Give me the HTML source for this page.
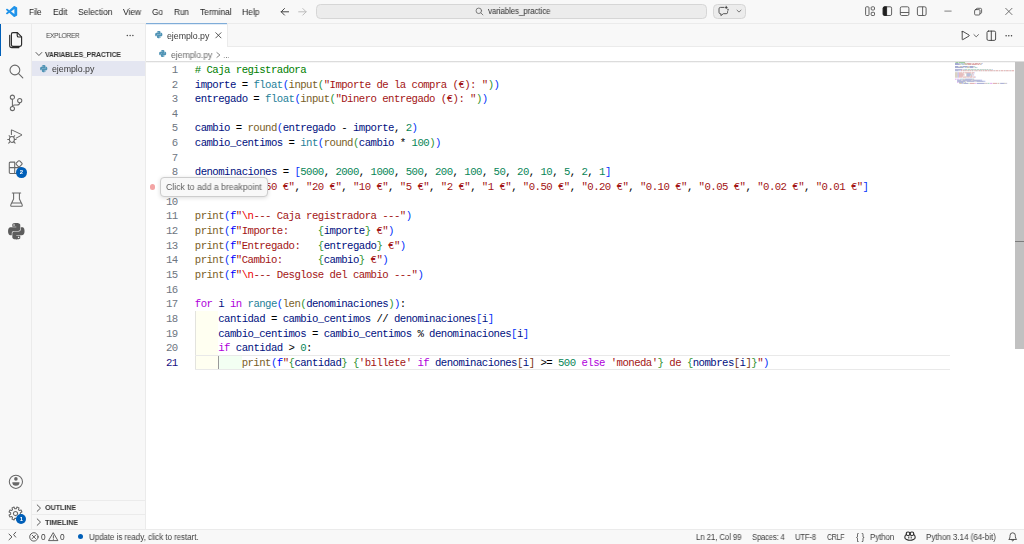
<!DOCTYPE html>
<html><head><meta charset="utf-8"><title>ejemplo.py - variables_practice</title>
<style>
html,body{margin:0;padding:0;}
body{width:1024px;height:544px;position:relative;overflow:hidden;background:#f8f8f8;font-family:"Liberation Sans",sans-serif;}
.a{position:absolute;}
.t{position:absolute;z-index:10;transform-origin:0 0;will-change:transform;white-space:pre;font-family:"Liberation Sans",sans-serif;}
.ln{position:absolute;left:146px;width:31.6px;text-align:right;font-family:"Liberation Mono",monospace;font-size:10.7px;letter-spacing:-0.557px;line-height:14.655px;height:14.655px;white-space:pre;}
.cl{position:absolute;left:194.8px;font-family:"Liberation Mono",monospace;font-size:10.7px;letter-spacing:-0.557px;line-height:14.655px;height:14.655px;white-space:pre;}
svg{position:absolute;overflow:visible;}
</style></head><body>
<!-- title bar -->
<div class="a" style="left:0;top:0;width:1024px;height:23px;background:#f8f8f8;border-bottom:1px solid #ebebeb;"></div>
<!-- search box -->
<div class="a" style="left:316.4px;top:3.8px;width:388.4px;height:13.6px;background:#ececec;border:0.8px solid #d6d6d6;border-radius:4.5px;"></div>
<!-- copilot button -->
<div class="a" style="left:713px;top:3.8px;width:31.2px;height:13.6px;background:#ececec;border:0.8px solid #d6d6d6;border-radius:4.5px;"></div>
<!-- activity bar -->
<div class="a" style="left:0;top:24px;width:31.2px;height:505px;background:#f8f8f8;border-right:1px solid #ebebeb;"></div>
<div class="a" style="left:0;top:24px;width:1.3px;height:31.5px;background:#005fb8;"></div>
<!-- sidebar -->
<div class="a" style="left:32.2px;top:24px;width:112.8px;height:505px;background:#f8f8f8;border-right:1px solid #ebebeb;"></div>
<div class="a" style="left:32.2px;top:61.4px;width:112.8px;height:14.7px;background:#e4e6f1;"></div>
<div class="a" style="left:32.2px;top:500px;width:112.8px;height:1px;background:#ebebeb;"></div>
<div class="a" style="left:32.2px;top:514.3px;width:112.8px;height:1px;background:#ebebeb;"></div>
<!-- tab bar -->
<div class="a" style="left:146px;top:24px;width:878px;height:22px;background:#f8f8f8;border-bottom:1px solid #ebebeb;"></div>
<div class="a" style="left:146px;top:23px;width:81px;height:24px;background:#ffffff;border-right:1px solid #ebebeb;"></div>
<div class="a" style="left:145.6px;top:23px;width:81.6px;height:1px;background:#7facd8;"></div><div class="a" style="left:145.6px;top:24px;width:81.6px;height:1px;background:#e3edf7;"></div>
<!-- editor -->
<div class="a" style="left:146px;top:47px;width:878px;height:482px;background:#ffffff;"></div>
<div class="a" style="left:146px;top:60.6px;width:878px;height:1px;background:#dcdcdc;"></div>
<div class="a" style="left:146px;top:61.6px;width:878px;height:1.5px;background:linear-gradient(#ececec,#ffffff);"></div>
<!-- indent rainbow -->
<div class="a" style="left:195px;top:311.2px;width:23.4px;height:58.4px;background:#fffff1;"></div>
<div class="a" style="left:218.4px;top:355.1px;width:23.2px;height:14.5px;background:#f3fff3;"></div>
<div class="a" style="left:194.5px;top:311.2px;width:0.8px;height:58.4px;background:#e3e3de;"></div>
<div class="a" style="left:217.8px;top:355.1px;width:0.9px;height:14.5px;background:#999999;"></div>
<!-- current line -->
<div class="a" style="left:195px;top:354.7px;width:755px;height:0.9px;background:#e9e9e9;"></div>
<div class="a" style="left:195px;top:369.1px;width:755px;height:0.9px;background:#e9e9e9;"></div>
<!-- scrollbar -->
<div class="a" style="left:1014.9px;top:61.5px;width:9.1px;height:287.2px;background:#c1c1c1;"></div>
<div class="a" style="left:1014.9px;top:240.6px;width:9.1px;height:1.6px;background:#7d7d7d;"></div>
<!-- tooltip -->
<div class="a" style="left:160.3px;top:176.9px;width:105.4px;height:18px;background:#f8f8f8;border:0.8px solid #cdcdcd;border-radius:4px;box-shadow:0 1px 4px rgba(0,0,0,0.14);z-index:20;"></div>
<div class="a" style="left:149.8px;top:184px;width:5.6px;height:5.6px;border-radius:50%;background:#f3a4a4;"></div>
<!-- status bar -->
<div class="a" style="left:0;top:529.3px;width:1024px;height:14.7px;background:#f8f8f8;border-top:1px solid #ebebeb;z-index:5;"></div>

<!--CODE-->
<svg style='left:0;top:0;z-index:3' width='1024' height='100' viewBox='0 0 1024 100' opacity='0.42' shape-rendering='auto'><rect x='955.00' y='62.00' width='0.53' height='0.84' fill='#008000'/><rect x='956.06' y='62.00' width='2.13' height='0.84' fill='#008000'/><rect x='958.72' y='62.00' width='6.38' height='0.84' fill='#008000'/><rect x='955.00' y='63.05' width='3.72' height='0.84' fill='#001080'/><rect x='959.26' y='63.05' width='0.53' height='0.84' fill='#000000'/><rect x='960.32' y='63.05' width='2.66' height='0.84' fill='#267f99'/><rect x='962.98' y='63.05' width='0.53' height='0.84' fill='#0431fa'/><rect x='963.51' y='63.05' width='2.66' height='0.84' fill='#795e26'/><rect x='966.17' y='63.05' width='0.53' height='0.84' fill='#319331'/><rect x='966.70' y='63.05' width='4.26' height='0.84' fill='#a31515'/><rect x='971.49' y='63.05' width='1.06' height='0.84' fill='#a31515'/><rect x='973.09' y='63.05' width='1.06' height='0.84' fill='#a31515'/><rect x='974.68' y='63.05' width='3.19' height='0.84' fill='#a31515'/><rect x='978.41' y='63.05' width='2.13' height='0.84' fill='#a31515'/><rect x='981.07' y='63.05' width='0.53' height='0.84' fill='#a31515'/><rect x='981.60' y='63.05' width='0.53' height='0.84' fill='#319331'/><rect x='982.13' y='63.05' width='0.53' height='0.84' fill='#0431fa'/><rect x='955.00' y='64.09' width='4.79' height='0.84' fill='#001080'/><rect x='960.32' y='64.09' width='0.53' height='0.84' fill='#000000'/><rect x='961.38' y='64.09' width='2.66' height='0.84' fill='#267f99'/><rect x='964.04' y='64.09' width='0.53' height='0.84' fill='#0431fa'/><rect x='964.58' y='64.09' width='2.66' height='0.84' fill='#795e26'/><rect x='967.24' y='64.09' width='0.53' height='0.84' fill='#319331'/><rect x='967.77' y='64.09' width='3.72' height='0.84' fill='#a31515'/><rect x='972.02' y='64.09' width='4.79' height='0.84' fill='#a31515'/><rect x='977.34' y='64.09' width='2.13' height='0.84' fill='#a31515'/><rect x='980.00' y='64.09' width='0.53' height='0.84' fill='#a31515'/><rect x='980.54' y='64.09' width='0.53' height='0.84' fill='#319331'/><rect x='981.07' y='64.09' width='0.53' height='0.84' fill='#0431fa'/><rect x='955.00' y='66.18' width='3.19' height='0.84' fill='#001080'/><rect x='958.72' y='66.18' width='0.53' height='0.84' fill='#000000'/><rect x='959.79' y='66.18' width='2.66' height='0.84' fill='#795e26'/><rect x='962.45' y='66.18' width='0.53' height='0.84' fill='#0431fa'/><rect x='962.98' y='66.18' width='4.79' height='0.84' fill='#001080'/><rect x='968.30' y='66.18' width='0.53' height='0.84' fill='#000000'/><rect x='969.36' y='66.18' width='3.72' height='0.84' fill='#001080'/><rect x='973.09' y='66.18' width='0.53' height='0.84' fill='#000000'/><rect x='974.15' y='66.18' width='0.53' height='0.84' fill='#098658'/><rect x='974.68' y='66.18' width='0.53' height='0.84' fill='#0431fa'/><rect x='955.00' y='67.22' width='7.98' height='0.84' fill='#001080'/><rect x='963.51' y='67.22' width='0.53' height='0.84' fill='#000000'/><rect x='964.58' y='67.22' width='1.60' height='0.84' fill='#267f99'/><rect x='966.17' y='67.22' width='0.53' height='0.84' fill='#0431fa'/><rect x='966.70' y='67.22' width='2.66' height='0.84' fill='#795e26'/><rect x='969.36' y='67.22' width='0.53' height='0.84' fill='#319331'/><rect x='969.90' y='67.22' width='3.19' height='0.84' fill='#001080'/><rect x='973.62' y='67.22' width='0.53' height='0.84' fill='#000000'/><rect x='974.68' y='67.22' width='1.60' height='0.84' fill='#098658'/><rect x='976.28' y='67.22' width='0.53' height='0.84' fill='#319331'/><rect x='976.81' y='67.22' width='0.53' height='0.84' fill='#0431fa'/><rect x='955.00' y='69.31' width='7.45' height='0.84' fill='#001080'/><rect x='962.98' y='69.31' width='0.53' height='0.84' fill='#000000'/><rect x='964.04' y='69.31' width='0.53' height='0.84' fill='#0431fa'/><rect x='964.58' y='69.31' width='2.13' height='0.84' fill='#098658'/><rect x='966.70' y='69.31' width='0.53' height='0.84' fill='#000000'/><rect x='967.77' y='69.31' width='2.13' height='0.84' fill='#098658'/><rect x='969.90' y='69.31' width='0.53' height='0.84' fill='#000000'/><rect x='970.96' y='69.31' width='2.13' height='0.84' fill='#098658'/><rect x='973.09' y='69.31' width='0.53' height='0.84' fill='#000000'/><rect x='974.15' y='69.31' width='1.60' height='0.84' fill='#098658'/><rect x='975.75' y='69.31' width='0.53' height='0.84' fill='#000000'/><rect x='976.81' y='69.31' width='1.60' height='0.84' fill='#098658'/><rect x='978.41' y='69.31' width='0.53' height='0.84' fill='#000000'/><rect x='979.47' y='69.31' width='1.60' height='0.84' fill='#098658'/><rect x='981.07' y='69.31' width='0.53' height='0.84' fill='#000000'/><rect x='982.13' y='69.31' width='1.06' height='0.84' fill='#098658'/><rect x='983.20' y='69.31' width='0.53' height='0.84' fill='#000000'/><rect x='984.26' y='69.31' width='1.06' height='0.84' fill='#098658'/><rect x='985.32' y='69.31' width='0.53' height='0.84' fill='#000000'/><rect x='986.39' y='69.31' width='1.06' height='0.84' fill='#098658'/><rect x='987.45' y='69.31' width='0.53' height='0.84' fill='#000000'/><rect x='988.52' y='69.31' width='0.53' height='0.84' fill='#098658'/><rect x='989.05' y='69.31' width='0.53' height='0.84' fill='#000000'/><rect x='990.11' y='69.31' width='0.53' height='0.84' fill='#098658'/><rect x='990.64' y='69.31' width='0.53' height='0.84' fill='#000000'/><rect x='991.71' y='69.31' width='0.53' height='0.84' fill='#098658'/><rect x='992.24' y='69.31' width='0.53' height='0.84' fill='#0431fa'/><rect x='955.00' y='70.36' width='3.72' height='0.84' fill='#001080'/><rect x='959.26' y='70.36' width='0.53' height='0.84' fill='#000000'/><rect x='960.32' y='70.36' width='0.53' height='0.84' fill='#0431fa'/><rect x='960.85' y='70.36' width='1.60' height='0.84' fill='#a31515'/><rect x='962.98' y='70.36' width='1.06' height='0.84' fill='#a31515'/><rect x='964.04' y='70.36' width='0.53' height='0.84' fill='#000000'/><rect x='965.11' y='70.36' width='1.60' height='0.84' fill='#a31515'/><rect x='967.24' y='70.36' width='1.06' height='0.84' fill='#a31515'/><rect x='968.30' y='70.36' width='0.53' height='0.84' fill='#000000'/><rect x='969.36' y='70.36' width='1.60' height='0.84' fill='#a31515'/><rect x='971.49' y='70.36' width='1.06' height='0.84' fill='#a31515'/><rect x='972.56' y='70.36' width='0.53' height='0.84' fill='#000000'/><rect x='973.62' y='70.36' width='1.06' height='0.84' fill='#a31515'/><rect x='975.22' y='70.36' width='1.06' height='0.84' fill='#a31515'/><rect x='976.28' y='70.36' width='0.53' height='0.84' fill='#000000'/><rect x='977.34' y='70.36' width='1.06' height='0.84' fill='#a31515'/><rect x='978.94' y='70.36' width='1.06' height='0.84' fill='#a31515'/><rect x='980.00' y='70.36' width='0.53' height='0.84' fill='#000000'/><rect x='981.07' y='70.36' width='1.06' height='0.84' fill='#a31515'/><rect x='982.66' y='70.36' width='1.06' height='0.84' fill='#a31515'/><rect x='983.73' y='70.36' width='0.53' height='0.84' fill='#000000'/><rect x='984.79' y='70.36' width='2.66' height='0.84' fill='#a31515'/><rect x='987.98' y='70.36' width='1.06' height='0.84' fill='#a31515'/><rect x='989.05' y='70.36' width='0.53' height='0.84' fill='#000000'/><rect x='990.11' y='70.36' width='2.66' height='0.84' fill='#a31515'/><rect x='993.30' y='70.36' width='1.06' height='0.84' fill='#a31515'/><rect x='994.37' y='70.36' width='0.53' height='0.84' fill='#000000'/><rect x='995.43' y='70.36' width='2.66' height='0.84' fill='#a31515'/><rect x='998.62' y='70.36' width='1.06' height='0.84' fill='#a31515'/><rect x='999.69' y='70.36' width='0.53' height='0.84' fill='#000000'/><rect x='1000.75' y='70.36' width='2.66' height='0.84' fill='#a31515'/><rect x='1003.94' y='70.36' width='1.06' height='0.84' fill='#a31515'/><rect x='1005.01' y='70.36' width='0.53' height='0.84' fill='#000000'/><rect x='1006.07' y='70.36' width='2.66' height='0.84' fill='#a31515'/><rect x='1009.26' y='70.36' width='1.06' height='0.84' fill='#a31515'/><rect x='1010.33' y='70.36' width='0.53' height='0.84' fill='#000000'/><rect x='1011.39' y='70.36' width='2.66' height='0.84' fill='#a31515'/><rect x='955.00' y='72.45' width='2.66' height='0.84' fill='#795e26'/><rect x='957.66' y='72.45' width='0.53' height='0.84' fill='#0431fa'/><rect x='958.19' y='72.45' width='0.53' height='0.84' fill='#0000ff'/><rect x='958.72' y='72.45' width='0.53' height='0.84' fill='#a31515'/><rect x='959.26' y='72.45' width='1.06' height='0.84' fill='#ee0000'/><rect x='960.32' y='72.45' width='1.60' height='0.84' fill='#a31515'/><rect x='962.45' y='72.45' width='2.13' height='0.84' fill='#a31515'/><rect x='965.11' y='72.45' width='6.38' height='0.84' fill='#a31515'/><rect x='972.02' y='72.45' width='2.13' height='0.84' fill='#a31515'/><rect x='974.15' y='72.45' width='0.53' height='0.84' fill='#0431fa'/><rect x='955.00' y='73.50' width='2.66' height='0.84' fill='#795e26'/><rect x='957.66' y='73.50' width='0.53' height='0.84' fill='#0431fa'/><rect x='958.19' y='73.50' width='0.53' height='0.84' fill='#0000ff'/><rect x='958.72' y='73.50' width='4.79' height='0.84' fill='#a31515'/><rect x='966.17' y='73.50' width='0.53' height='0.84' fill='#319331'/><rect x='966.70' y='73.50' width='3.72' height='0.84' fill='#001080'/><rect x='970.43' y='73.50' width='0.53' height='0.84' fill='#319331'/><rect x='971.49' y='73.50' width='1.06' height='0.84' fill='#a31515'/><rect x='972.56' y='73.50' width='0.53' height='0.84' fill='#0431fa'/><rect x='955.00' y='74.54' width='2.66' height='0.84' fill='#795e26'/><rect x='957.66' y='74.54' width='0.53' height='0.84' fill='#0431fa'/><rect x='958.19' y='74.54' width='0.53' height='0.84' fill='#0000ff'/><rect x='958.72' y='74.54' width='5.85' height='0.84' fill='#a31515'/><rect x='966.17' y='74.54' width='0.53' height='0.84' fill='#319331'/><rect x='966.70' y='74.54' width='4.79' height='0.84' fill='#001080'/><rect x='971.49' y='74.54' width='0.53' height='0.84' fill='#319331'/><rect x='972.56' y='74.54' width='1.06' height='0.84' fill='#a31515'/><rect x='973.62' y='74.54' width='0.53' height='0.84' fill='#0431fa'/><rect x='955.00' y='75.58' width='2.66' height='0.84' fill='#795e26'/><rect x='957.66' y='75.58' width='0.53' height='0.84' fill='#0431fa'/><rect x='958.19' y='75.58' width='0.53' height='0.84' fill='#0000ff'/><rect x='958.72' y='75.58' width='4.26' height='0.84' fill='#a31515'/><rect x='966.17' y='75.58' width='0.53' height='0.84' fill='#319331'/><rect x='966.70' y='75.58' width='3.19' height='0.84' fill='#001080'/><rect x='969.90' y='75.58' width='0.53' height='0.84' fill='#319331'/><rect x='970.96' y='75.58' width='1.06' height='0.84' fill='#a31515'/><rect x='972.02' y='75.58' width='0.53' height='0.84' fill='#0431fa'/><rect x='955.00' y='76.63' width='2.66' height='0.84' fill='#795e26'/><rect x='957.66' y='76.63' width='0.53' height='0.84' fill='#0431fa'/><rect x='958.19' y='76.63' width='0.53' height='0.84' fill='#0000ff'/><rect x='958.72' y='76.63' width='0.53' height='0.84' fill='#a31515'/><rect x='959.26' y='76.63' width='1.06' height='0.84' fill='#ee0000'/><rect x='960.32' y='76.63' width='1.60' height='0.84' fill='#a31515'/><rect x='962.45' y='76.63' width='4.26' height='0.84' fill='#a31515'/><rect x='967.24' y='76.63' width='1.60' height='0.84' fill='#a31515'/><rect x='969.36' y='76.63' width='3.19' height='0.84' fill='#a31515'/><rect x='973.09' y='76.63' width='2.13' height='0.84' fill='#a31515'/><rect x='975.22' y='76.63' width='0.53' height='0.84' fill='#0431fa'/><rect x='955.00' y='78.72' width='1.60' height='0.84' fill='#af00db'/><rect x='957.13' y='78.72' width='0.53' height='0.84' fill='#001080'/><rect x='958.19' y='78.72' width='1.06' height='0.84' fill='#af00db'/><rect x='959.79' y='78.72' width='2.66' height='0.84' fill='#267f99'/><rect x='962.45' y='78.72' width='0.53' height='0.84' fill='#0431fa'/><rect x='962.98' y='78.72' width='1.60' height='0.84' fill='#795e26'/><rect x='964.58' y='78.72' width='0.53' height='0.84' fill='#319331'/><rect x='965.11' y='78.72' width='7.45' height='0.84' fill='#001080'/><rect x='972.56' y='78.72' width='0.53' height='0.84' fill='#319331'/><rect x='973.09' y='78.72' width='0.53' height='0.84' fill='#0431fa'/><rect x='973.62' y='78.72' width='0.53' height='0.84' fill='#000000'/><rect x='957.13' y='79.77' width='4.26' height='0.84' fill='#001080'/><rect x='961.92' y='79.77' width='0.53' height='0.84' fill='#000000'/><rect x='962.98' y='79.77' width='7.98' height='0.84' fill='#001080'/><rect x='971.49' y='79.77' width='1.06' height='0.84' fill='#000000'/><rect x='973.09' y='79.77' width='7.45' height='0.84' fill='#001080'/><rect x='980.54' y='79.77' width='0.53' height='0.84' fill='#0431fa'/><rect x='981.07' y='79.77' width='0.53' height='0.84' fill='#001080'/><rect x='981.60' y='79.77' width='0.53' height='0.84' fill='#0431fa'/><rect x='957.13' y='80.81' width='7.98' height='0.84' fill='#001080'/><rect x='965.64' y='80.81' width='0.53' height='0.84' fill='#000000'/><rect x='966.70' y='80.81' width='7.98' height='0.84' fill='#001080'/><rect x='975.22' y='80.81' width='0.53' height='0.84' fill='#000000'/><rect x='976.28' y='80.81' width='7.45' height='0.84' fill='#001080'/><rect x='983.73' y='80.81' width='0.53' height='0.84' fill='#0431fa'/><rect x='984.26' y='80.81' width='0.53' height='0.84' fill='#001080'/><rect x='984.79' y='80.81' width='0.53' height='0.84' fill='#0431fa'/><rect x='957.13' y='81.85' width='1.06' height='0.84' fill='#af00db'/><rect x='958.72' y='81.85' width='4.26' height='0.84' fill='#001080'/><rect x='963.51' y='81.85' width='0.53' height='0.84' fill='#000000'/><rect x='964.58' y='81.85' width='0.53' height='0.84' fill='#098658'/><rect x='965.11' y='81.85' width='0.53' height='0.84' fill='#000000'/><rect x='959.26' y='82.90' width='2.66' height='0.84' fill='#795e26'/><rect x='961.92' y='82.90' width='0.53' height='0.84' fill='#0431fa'/><rect x='962.45' y='82.90' width='0.53' height='0.84' fill='#0000ff'/><rect x='962.98' y='82.90' width='0.53' height='0.84' fill='#a31515'/><rect x='963.51' y='82.90' width='0.53' height='0.84' fill='#319331'/><rect x='964.04' y='82.90' width='4.26' height='0.84' fill='#001080'/><rect x='968.30' y='82.90' width='0.53' height='0.84' fill='#319331'/><rect x='969.36' y='82.90' width='0.53' height='0.84' fill='#319331'/><rect x='969.90' y='82.90' width='4.79' height='0.84' fill='#a31515'/><rect x='975.22' y='82.90' width='1.06' height='0.84' fill='#af00db'/><rect x='976.81' y='82.90' width='7.45' height='0.84' fill='#001080'/><rect x='984.26' y='82.90' width='0.53' height='0.84' fill='#7b3814'/><rect x='984.79' y='82.90' width='0.53' height='0.84' fill='#001080'/><rect x='985.32' y='82.90' width='0.53' height='0.84' fill='#7b3814'/><rect x='986.39' y='82.90' width='1.06' height='0.84' fill='#000000'/><rect x='987.98' y='82.90' width='1.60' height='0.84' fill='#098658'/><rect x='990.11' y='82.90' width='2.13' height='0.84' fill='#af00db'/><rect x='992.77' y='82.90' width='4.26' height='0.84' fill='#a31515'/><rect x='997.03' y='82.90' width='0.53' height='0.84' fill='#319331'/><rect x='998.09' y='82.90' width='1.06' height='0.84' fill='#a31515'/><rect x='999.69' y='82.90' width='0.53' height='0.84' fill='#319331'/><rect x='1000.22' y='82.90' width='3.72' height='0.84' fill='#001080'/><rect x='1003.94' y='82.90' width='0.53' height='0.84' fill='#7b3814'/><rect x='1004.48' y='82.90' width='0.53' height='0.84' fill='#001080'/><rect x='1005.01' y='82.90' width='0.53' height='0.84' fill='#7b3814'/><rect x='1005.54' y='82.90' width='0.53' height='0.84' fill='#319331'/><rect x='1006.07' y='82.90' width='0.53' height='0.84' fill='#a31515'/><rect x='1006.60' y='82.90' width='0.53' height='0.84' fill='#0431fa'/></svg>
<div class='ln' style='top:63.000px;color:#6e7681'>1</div>
<div class='cl' style='top:63.000px'><span style='color:#008000'># Caja registradora</span></div>
<div class='ln' style='top:78.000px;color:#6e7681'>2</div>
<div class='cl' style='top:78.000px'><span style='color:#001080'>importe</span><span style='color:#000000'> = </span><span style='color:#267f99'>float</span><span style='color:#0431fa'>(</span><span style='color:#795e26'>input</span><span style='color:#319331'>(</span><span style='color:#a31515'>&quot;Importe de la compra (€): &quot;</span><span style='color:#319331'>)</span><span style='color:#0431fa'>)</span></div>
<div class='ln' style='top:92.000px;color:#6e7681'>3</div>
<div class='cl' style='top:92.000px'><span style='color:#001080'>entregado</span><span style='color:#000000'> = </span><span style='color:#267f99'>float</span><span style='color:#0431fa'>(</span><span style='color:#795e26'>input</span><span style='color:#319331'>(</span><span style='color:#a31515'>&quot;Dinero entregado (€): &quot;</span><span style='color:#319331'>)</span><span style='color:#0431fa'>)</span></div>
<div class='ln' style='top:107.000px;color:#6e7681'>4</div>
<div class='ln' style='top:121.000px;color:#6e7681'>5</div>
<div class='cl' style='top:121.000px'><span style='color:#001080'>cambio</span><span style='color:#000000'> = </span><span style='color:#795e26'>round</span><span style='color:#0431fa'>(</span><span style='color:#001080'>entregado</span><span style='color:#000000'> - </span><span style='color:#001080'>importe</span><span style='color:#000000'>, </span><span style='color:#098658'>2</span><span style='color:#0431fa'>)</span></div>
<div class='ln' style='top:136.000px;color:#6e7681'>6</div>
<div class='cl' style='top:136.000px'><span style='color:#001080'>cambio_centimos</span><span style='color:#000000'> = </span><span style='color:#267f99'>int</span><span style='color:#0431fa'>(</span><span style='color:#795e26'>round</span><span style='color:#319331'>(</span><span style='color:#001080'>cambio</span><span style='color:#000000'> * </span><span style='color:#098658'>100</span><span style='color:#319331'>)</span><span style='color:#0431fa'>)</span></div>
<div class='ln' style='top:151.000px;color:#6e7681'>7</div>
<div class='ln' style='top:165.000px;color:#6e7681'>8</div>
<div class='cl' style='top:165.000px'><span style='color:#001080'>denominaciones</span><span style='color:#000000'> = </span><span style='color:#0431fa'>[</span><span style='color:#098658'>5000</span><span style='color:#000000'>, </span><span style='color:#098658'>2000</span><span style='color:#000000'>, </span><span style='color:#098658'>1000</span><span style='color:#000000'>, </span><span style='color:#098658'>500</span><span style='color:#000000'>, </span><span style='color:#098658'>200</span><span style='color:#000000'>, </span><span style='color:#098658'>100</span><span style='color:#000000'>, </span><span style='color:#098658'>50</span><span style='color:#000000'>, </span><span style='color:#098658'>20</span><span style='color:#000000'>, </span><span style='color:#098658'>10</span><span style='color:#000000'>, </span><span style='color:#098658'>5</span><span style='color:#000000'>, </span><span style='color:#098658'>2</span><span style='color:#000000'>, </span><span style='color:#098658'>1</span><span style='color:#0431fa'>]</span></div>
<div class='ln' style='top:180.000px;color:#6e7681'>9</div>
<div class='cl' style='top:180.000px'><span style='color:#001080'>nombres</span><span style='color:#000000'> = </span><span style='color:#0431fa'>[</span><span style='color:#a31515'>&quot;50 €&quot;</span><span style='color:#000000'>, </span><span style='color:#a31515'>&quot;20 €&quot;</span><span style='color:#000000'>, </span><span style='color:#a31515'>&quot;10 €&quot;</span><span style='color:#000000'>, </span><span style='color:#a31515'>&quot;5 €&quot;</span><span style='color:#000000'>, </span><span style='color:#a31515'>&quot;2 €&quot;</span><span style='color:#000000'>, </span><span style='color:#a31515'>&quot;1 €&quot;</span><span style='color:#000000'>, </span><span style='color:#a31515'>&quot;0.50 €&quot;</span><span style='color:#000000'>, </span><span style='color:#a31515'>&quot;0.20 €&quot;</span><span style='color:#000000'>, </span><span style='color:#a31515'>&quot;0.10 €&quot;</span><span style='color:#000000'>, </span><span style='color:#a31515'>&quot;0.05 €&quot;</span><span style='color:#000000'>, </span><span style='color:#a31515'>&quot;0.02 €&quot;</span><span style='color:#000000'>, </span><span style='color:#a31515'>&quot;0.01 €&quot;</span><span style='color:#0431fa'>]</span></div>
<div class='ln' style='top:195.000px;color:#6e7681'>10</div>
<div class='ln' style='top:209.000px;color:#6e7681'>11</div>
<div class='cl' style='top:209.000px'><span style='color:#795e26'>print</span><span style='color:#0431fa'>(</span><span style='color:#0000ff'>f</span><span style='color:#a31515'>&quot;</span><span style='color:#ee0000'>\n</span><span style='color:#a31515'>--- Caja registradora ---&quot;</span><span style='color:#0431fa'>)</span></div>
<div class='ln' style='top:224.000px;color:#6e7681'>12</div>
<div class='cl' style='top:224.000px'><span style='color:#795e26'>print</span><span style='color:#0431fa'>(</span><span style='color:#0000ff'>f</span><span style='color:#a31515'>&quot;Importe:     </span><span style='color:#319331'>{</span><span style='color:#001080'>importe</span><span style='color:#319331'>}</span><span style='color:#a31515'> €&quot;</span><span style='color:#0431fa'>)</span></div>
<div class='ln' style='top:239.000px;color:#6e7681'>13</div>
<div class='cl' style='top:239.000px'><span style='color:#795e26'>print</span><span style='color:#0431fa'>(</span><span style='color:#0000ff'>f</span><span style='color:#a31515'>&quot;Entregado:   </span><span style='color:#319331'>{</span><span style='color:#001080'>entregado</span><span style='color:#319331'>}</span><span style='color:#a31515'> €&quot;</span><span style='color:#0431fa'>)</span></div>
<div class='ln' style='top:253.000px;color:#6e7681'>14</div>
<div class='cl' style='top:253.000px'><span style='color:#795e26'>print</span><span style='color:#0431fa'>(</span><span style='color:#0000ff'>f</span><span style='color:#a31515'>&quot;Cambio:      </span><span style='color:#319331'>{</span><span style='color:#001080'>cambio</span><span style='color:#319331'>}</span><span style='color:#a31515'> €&quot;</span><span style='color:#0431fa'>)</span></div>
<div class='ln' style='top:268.000px;color:#6e7681'>15</div>
<div class='cl' style='top:268.000px'><span style='color:#795e26'>print</span><span style='color:#0431fa'>(</span><span style='color:#0000ff'>f</span><span style='color:#a31515'>&quot;</span><span style='color:#ee0000'>\n</span><span style='color:#a31515'>--- Desglose del cambio ---&quot;</span><span style='color:#0431fa'>)</span></div>
<div class='ln' style='top:283.000px;color:#6e7681'>16</div>
<div class='ln' style='top:297.000px;color:#6e7681'>17</div>
<div class='cl' style='top:297.000px'><span style='color:#af00db'>for</span><span style='color:#000000'> </span><span style='color:#001080'>i</span><span style='color:#000000'> </span><span style='color:#af00db'>in</span><span style='color:#000000'> </span><span style='color:#267f99'>range</span><span style='color:#0431fa'>(</span><span style='color:#795e26'>len</span><span style='color:#319331'>(</span><span style='color:#001080'>denominaciones</span><span style='color:#319331'>)</span><span style='color:#0431fa'>)</span><span style='color:#000000'>:</span></div>
<div class='ln' style='top:312.000px;color:#6e7681'>18</div>
<div class='cl' style='top:312.000px'><span style='color:#000000'>    </span><span style='color:#001080'>cantidad</span><span style='color:#000000'> = </span><span style='color:#001080'>cambio_centimos</span><span style='color:#000000'> // </span><span style='color:#001080'>denominaciones</span><span style='color:#0431fa'>[</span><span style='color:#001080'>i</span><span style='color:#0431fa'>]</span></div>
<div class='ln' style='top:327.000px;color:#6e7681'>19</div>
<div class='cl' style='top:327.000px'><span style='color:#000000'>    </span><span style='color:#001080'>cambio_centimos</span><span style='color:#000000'> = </span><span style='color:#001080'>cambio_centimos</span><span style='color:#000000'> % </span><span style='color:#001080'>denominaciones</span><span style='color:#0431fa'>[</span><span style='color:#001080'>i</span><span style='color:#0431fa'>]</span></div>
<div class='ln' style='top:341.000px;color:#6e7681'>20</div>
<div class='cl' style='top:341.000px'><span style='color:#000000'>    </span><span style='color:#af00db'>if</span><span style='color:#000000'> </span><span style='color:#001080'>cantidad</span><span style='color:#000000'> &gt; </span><span style='color:#098658'>0</span><span style='color:#000000'>:</span></div>
<div class='ln' style='top:356.000px;color:#171184'>21</div>
<div class='cl' style='top:356.000px'><span style='color:#000000'>        </span><span style='color:#795e26'>print</span><span style='color:#0431fa'>(</span><span style='color:#0000ff'>f</span><span style='color:#a31515'>&quot;</span><span style='color:#319331'>{</span><span style='color:#001080'>cantidad</span><span style='color:#319331'>}</span><span style='color:#a31515'> </span><span style='color:#319331'>{</span><span style='color:#a31515'>&#x27;billete&#x27;</span><span style='color:#000000'> </span><span style='color:#af00db'>if</span><span style='color:#000000'> </span><span style='color:#001080'>denominaciones</span><span style='color:#7b3814'>[</span><span style='color:#001080'>i</span><span style='color:#7b3814'>]</span><span style='color:#000000'> &gt;= </span><span style='color:#098658'>500</span><span style='color:#000000'> </span><span style='color:#af00db'>else</span><span style='color:#000000'> </span><span style='color:#a31515'>&#x27;moneda&#x27;</span><span style='color:#319331'>}</span><span style='color:#a31515'> de </span><span style='color:#319331'>{</span><span style='color:#001080'>nombres</span><span style='color:#7b3814'>[</span><span style='color:#001080'>i</span><span style='color:#7b3814'>]</span><span style='color:#319331'>}</span><span style='color:#a31515'>&quot;</span><span style='color:#0431fa'>)</span></div>
<!--TEXT-->
<div class='t' style='left:28.90px;top:6.00px;font-size:8.8px;line-height:12px;letter-spacing:-0.138px;transform:scaleX(0.9167);color:#1e1e1e;font-weight:400;'>File</div>
<div class='t' style='left:52.50px;top:6.00px;font-size:8.8px;line-height:12px;letter-spacing:-0.060px;transform:scaleX(0.9644);color:#1e1e1e;font-weight:400;'>Edit</div>
<div class='t' style='left:77.70px;top:6.00px;font-size:8.8px;line-height:12px;letter-spacing:-0.059px;transform:scaleX(0.9671);color:#1e1e1e;font-weight:400;'>Selection</div>
<div class='t' style='left:123.00px;top:6.00px;font-size:8.8px;line-height:12px;letter-spacing:-0.072px;transform:scaleX(0.9659);color:#1e1e1e;font-weight:400;'>View</div>
<div class='t' style='left:152.10px;top:6.00px;font-size:8.8px;line-height:12px;letter-spacing:-0.151px;transform:scaleX(0.9434);color:#1e1e1e;font-weight:400;'>Go</div>
<div class='t' style='left:173.60px;top:6.00px;font-size:8.8px;line-height:12px;letter-spacing:-0.142px;transform:scaleX(0.9419);color:#1e1e1e;font-weight:400;'>Run</div>
<div class='t' style='left:199.80px;top:6.00px;font-size:8.8px;line-height:12px;letter-spacing:-0.064px;transform:scaleX(0.9653);color:#1e1e1e;font-weight:400;'>Terminal</div>
<div class='t' style='left:242.30px;top:6.00px;font-size:8.8px;line-height:12px;letter-spacing:-0.053px;transform:scaleX(0.9732);color:#1e1e1e;font-weight:400;'>Help</div>
<div class='t' style='left:487.60px;top:5.00px;font-size:8.8px;line-height:12px;letter-spacing:-0.155px;transform:scaleX(0.9160);color:#333333;font-weight:400;'>variables_practice</div>
<div class='t' style='left:45.50px;top:30.00px;font-size:7.8px;line-height:12px;letter-spacing:-0.400px;transform:scaleX(0.8505);color:#4a4a4a;font-weight:400;'>EXPLORER</div>
<div class='t' style='left:45.20px;top:49.00px;font-size:7.6px;line-height:12px;letter-spacing:-0.192px;transform:scaleX(0.9144);color:#333333;font-weight:700;'>VARIABLES_PRACTICE</div>
<div class='t' style='left:52.00px;top:63.00px;font-size:8.8px;line-height:12px;letter-spacing:-0.020px;transform:scaleX(0.9894);color:#3b3b3b;font-weight:400;'>ejemplo.py</div>
<div class='t' style='left:45.30px;top:502.00px;font-size:7.6px;line-height:12px;letter-spacing:-0.105px;transform:scaleX(0.9511);color:#333333;font-weight:700;'>OUTLINE</div>
<div class='t' style='left:45.30px;top:517.00px;font-size:7.6px;line-height:12px;letter-spacing:-0.092px;transform:scaleX(0.9538);color:#333333;font-weight:700;'>TIMELINE</div>
<div class='t' style='left:166.80px;top:30.00px;font-size:8.8px;line-height:12px;letter-spacing:-0.020px;transform:scaleX(0.9894);color:#3b3b3b;font-weight:400;'>ejemplo.py</div>
<div class='t' style='left:170.80px;top:49.00px;font-size:8.8px;line-height:12px;letter-spacing:-0.035px;transform:scaleX(0.9811);color:#6a6a6a;font-weight:400;'>ejemplo.py</div>
<div class='t' style='left:223.40px;top:49.00px;font-size:8.8px;line-height:12px;letter-spacing:-1.129px;transform:scaleX(0.7695);color:#6a6a6a;font-weight:400;'>…</div>
<div class='t' style='left:166.30px;top:181.00px;font-size:8.8px;line-height:12px;letter-spacing:-0.014px;transform:scaleX(0.9918);color:#5e5e5e;font-weight:400;z-index:30;'>Click to add a breakpoint</div>
<div class='t' style='left:40.80px;top:531.00px;font-size:8.3px;line-height:12px;letter-spacing:-0.136px;transform:scaleX(0.9357);color:#3b3b3b;font-weight:400;'>0</div>
<div class='t' style='left:60.40px;top:531.00px;font-size:8.3px;line-height:12px;letter-spacing:-0.136px;transform:scaleX(0.9357);color:#3b3b3b;font-weight:400;'>0</div>
<div class='t' style='left:88.50px;top:531.00px;font-size:8.3px;line-height:12px;letter-spacing:-0.056px;transform:scaleX(0.9631);color:#3b3b3b;font-weight:400;'>Update is ready, click to restart.</div>
<div class='t' style='left:695.60px;top:531.00px;font-size:8.3px;line-height:12px;letter-spacing:-0.094px;transform:scaleX(0.9453);color:#3b3b3b;font-weight:400;'>Ln 21, Col 99</div>
<div class='t' style='left:751.70px;top:531.00px;font-size:8.3px;line-height:12px;letter-spacing:-0.156px;transform:scaleX(0.9183);color:#3b3b3b;font-weight:400;'>Spaces: 4</div>
<div class='t' style='left:794.90px;top:531.00px;font-size:8.3px;line-height:12px;letter-spacing:-0.170px;transform:scaleX(0.9221);color:#3b3b3b;font-weight:400;'>UTF-8</div>
<div class='t' style='left:826.80px;top:531.00px;font-size:8.3px;line-height:12px;letter-spacing:-0.392px;transform:scaleX(0.8556);color:#3b3b3b;font-weight:400;'>CRLF</div>
<div class='t' style='left:855.60px;top:531.00px;font-size:8.3px;line-height:12px;letter-spacing:0.078px;transform:scaleX(1.0749);color:#3b3b3b;font-weight:400;'>{ }</div>
<div class='t' style='left:869.60px;top:531.00px;font-size:8.3px;line-height:12px;letter-spacing:-0.086px;transform:scaleX(0.9555);color:#3b3b3b;font-weight:400;'>Python</div>
<div class='t' style='left:926.20px;top:531.00px;font-size:8.3px;line-height:12px;letter-spacing:-0.048px;transform:scaleX(0.9705);color:#3b3b3b;font-weight:400;'>Python 3.14 (64-bit)</div>
<!-- vscode logo -->
<svg style="left:6.1px;top:5.7px;z-index:12" width="11.2" height="11.0" viewBox="0 0 24 24" preserveAspectRatio="none"><path fill="#1f93ea" d="M23.15 2.587L18.21.21a1.494 1.494 0 0 0-1.705.29l-9.46 8.63-4.12-3.128a.999.999 0 0 0-1.276.057L.327 7.261A1 1 0 0 0 .326 8.74L3.899 12 .326 15.26a1 1 0 0 0 .001 1.479L1.65 17.94a.999.999 0 0 0 1.276.057l4.12-3.128 9.46 8.63a1.492 1.492 0 0 0 1.704.29l4.942-2.377A1.5 1.5 0 0 0 24 20.06V3.939a1.5 1.5 0 0 0-.85-1.352zm-5.146 14.861L10.826 12l7.178-5.448v10.896z"/></svg>
<!-- nav arrows -->
<svg style="left:280px;top:6px;z-index:12" width="30" height="12" viewBox="0 0 30 12" fill="none" stroke-linecap="round" stroke-linejoin="round">
<path d="M1.2 5.8H8.6M4.5 2.5L1.2 5.8L4.5 9.1" stroke="#3b3b3b" stroke-width="0.95"/>
<path d="M18.7 5.8H26.1M22.8 2.5L26.1 5.8L22.8 9.1" stroke="#b8b8b8" stroke-width="0.95"/>
</svg>
<!-- search icon in box -->
<svg style="left:475px;top:7.2px;z-index:12" width="10" height="10" viewBox="0 0 10 10" fill="none" stroke="#6a6a6a" stroke-width="0.85" stroke-linecap="round"><circle cx="3.8" cy="3.8" r="2.75"/><path d="M5.9 5.9L7.9 7.9"/></svg>
<!-- copilot chat icon + chevron -->
<svg style="left:717.8px;top:5.8px;z-index:12" width="26" height="12" viewBox="0 0 26 12" fill="none" stroke="#3b3b3b" stroke-width="0.85" stroke-linecap="round" stroke-linejoin="round">
<path d="M6 1.4H2.4Q1 1.4 1 2.8V6.3Q1 7.7 2.4 7.7H2.9V9.6L5.4 7.7H8.2Q9.6 7.7 9.6 6.3V5.6"/>
<path d="M8.2 0.1L8.6 1.1L9.6 1.5L8.6 1.9L8.2 2.9L7.8 1.9L6.8 1.5L7.8 1.1Z" fill="#3b3b3b" stroke-width="0.3"/>
<path d="M10 2.9L10.25 3.55L10.9 3.8L10.25 4.05L10 4.7L9.75 4.05L9.1 3.8L9.75 3.55Z" fill="#3b3b3b" stroke-width="0.25"/>
<path d="M19 4.2L21 6.1L23 4.2" stroke="#5a5a5a" stroke-width="0.8"/>
</svg>
<!-- layout controls -->
<svg style="left:864px;top:5px;z-index:12" width="64" height="13" viewBox="0 0 64 13" fill="none" stroke="#474747" stroke-width="0.85" stroke-linejoin="round">
<rect x="1.6" y="1.8" width="3.4" height="8.7" rx="0.9"/>
<rect x="7.2" y="1.8" width="3.3" height="3.2" rx="0.9"/>
<rect x="7.2" y="7.3" width="3.3" height="3.2" rx="0.7"/>
<rect x="19.2" y="1.8" width="8.4" height="8.7" rx="1.4"/>
<path d="M19.2 3.2Q19.2 1.8 20.6 1.8H22.6V10.5H20.6Q19.2 10.5 19.2 9.1Z" fill="#1f1f1f" stroke="#1f1f1f"/>
<rect x="36.3" y="1.8" width="8.6" height="8.7" rx="1.4"/>
<path d="M36.3 7.5H44.9"/>
<rect x="53.4" y="1.8" width="8.7" height="8.7" rx="1.4"/>
<path d="M58.6 1.8V10.5"/>
</svg>
<!-- window controls -->
<svg style="left:940px;top:4px;z-index:12" width="80" height="16" viewBox="0 0 80 16" fill="none" stroke="#4a4a4a" stroke-width="0.85" stroke-linecap="round" stroke-linejoin="round">
<path d="M4.8 7.1H11.2" stroke="#6a6a6a"/>
<rect x="34.6" y="5.6" width="5.4" height="5.4" rx="1.1"/>
<path d="M36.3 5.6V5.2Q36.3 4.3 37.3 4.3H40.4Q41.6 4.3 41.6 5.5V8.4Q41.6 9.4 40.6 9.4H40"/>
<path d="M65.7 4.3L72 10.6M72 4.3L65.7 10.6" stroke="#5a5a5a"/>
</svg>
<!-- ACTIVITY BAR -->
<!-- files -->
<svg style="left:8px;top:30.5px;z-index:12" width="16" height="18" viewBox="0 0 16 18" fill="none" stroke="#2a2a2a" stroke-width="1.15" stroke-linejoin="round" stroke-linecap="round">
<path d="M5.0 1.6H9.4L13.6 5.8V13.6Q13.6 15.3 11.9 15.3H5.0Q3.4 15.3 3.4 13.7V3.2Q3.4 1.6 5.0 1.6Z"/>
<path d="M9.2 1.8V4.4Q9.2 6 10.8 6H13.4"/>
<path d="M1.7 4.2V14.4Q1.7 16.6 3.9 16.6H11"/>
</svg>
<!-- search -->
<svg style="left:8.6px;top:64px;z-index:12" width="15" height="15" viewBox="0 0 15 15" fill="none" stroke="#686868" stroke-width="1.1" stroke-linecap="round"><circle cx="5.9" cy="6" r="4.9"/><path d="M9.6 9.7L13.8 13.9"/></svg>
<!-- source control -->
<svg style="left:9px;top:94.1px;z-index:12" width="14" height="18" viewBox="0 0 14 18" fill="none" stroke="#686868" stroke-width="1.05" stroke-linecap="round" stroke-linejoin="round">
<circle cx="3.4" cy="3.2" r="2.1"/><circle cx="10.7" cy="6.6" r="2.1"/><circle cx="3.4" cy="14.5" r="2.1"/>
<path d="M3.4 5.3V12.4M10.7 8.7Q10.7 11 8 11H5.6Q3.4 11 3.4 12.4"/>
</svg>
<!-- run and debug -->
<svg style="left:7px;top:129px;z-index:12" width="17" height="16" viewBox="0 0 17 16" fill="none" stroke="#686868" stroke-width="1.05" stroke-linecap="round" stroke-linejoin="round">
<path d="M4.4 5.4V1.5Q4.4 0.7 5.2 1.1L14.2 5.4Q15 5.9 14.2 6.4L9.2 9.1"/>
<ellipse cx="4.9" cy="10.4" rx="2.5" ry="3"/>
<path d="M3.2 7.8L2.1 6.7M6.6 7.8L7.7 6.7M2.4 10.4H0.7M7.4 10.4H9.1M2.9 12.8L1.7 14.1M6.9 12.8L8.1 14.1"/>
</svg>
<!-- extensions -->
<svg style="left:8.4px;top:160px;z-index:12" width="16" height="16" viewBox="0 0 16 16" fill="none" stroke="#686868" stroke-width="1.05" stroke-linejoin="round">
<path d="M2.4 2.1H6.7V13.4H2.4Q1.3 13.4 1.3 12.3V3.2Q1.3 2.1 2.4 2.1Z"/>
<path d="M1.3 7.6H12.4V12.3Q12.4 13.4 11.3 13.4H6.7"/>
<rect x="8.6" y="1.3" width="4.9" height="4.9" rx="0.9" transform="rotate(45 11.05 3.75)"/>
</svg>
<div class="a" style="left:15.8px;top:167.2px;width:10.8px;height:10.8px;border-radius:50%;background:#005fb8;z-index:13;"></div>
<div class="t" style="left:15.8px;top:167.2px;width:10.8px;text-align:center;font-size:6px;line-height:11px;color:#fff;font-weight:700;z-index:14;">2</div>
<!-- testing flask -->
<svg style="left:9.5px;top:191.5px;z-index:12" width="14" height="16" viewBox="0 0 14 16" fill="none" stroke="#686868" stroke-width="1.05" stroke-linecap="round" stroke-linejoin="round">
<path d="M2.3 1H10.7M3.6 1V7L0.9 12.6Q0.2 14.3 1.9 14.3H11.1Q12.8 14.3 12.1 12.6L9.4 7V1M1.8 11H11.2"/>
</svg>
<!-- python (activity) -->
<svg style="left:7.7px;top:223.1px;z-index:12" width="16.6" height="16.4" viewBox="0 0 24 24"><path fill="#5c5c5c" d="M14.25.18l.9.2.73.26.59.3.45.32.34.34.25.34.16.33.1.3.04.26.02.2-.01.13V8.5l-.05.63-.13.55-.21.46-.26.38-.3.31-.33.25-.35.19-.35.14-.33.1-.3.07-.26.04-.21.02H8.77l-.69.05-.59.14-.5.22-.41.27-.33.32-.27.35-.2.36-.15.37-.1.35-.07.32-.04.27-.02.21v3.06H3.17l-.21-.03-.28-.07-.32-.12-.35-.18-.36-.26-.36-.36-.35-.46-.32-.59-.28-.73-.21-.88-.14-1.05-.05-1.23.06-1.22.16-1.04.24-.87.32-.71.36-.57.4-.44.42-.33.42-.24.4-.16.36-.1.32-.05.24-.01h.16l.06.01h8.16v-.83H6.18l-.01-2.75-.02-.37.05-.34.11-.31.17-.28.25-.26.31-.23.38-.2.44-.18.51-.15.58-.12.64-.1.71-.06.77-.04.84-.02 1.27.05zm-6.3 1.98l-.23.33-.08.41.08.41.23.34.33.22.41.09.41-.09.33-.22.23-.34.08-.41-.08-.41-.23-.33-.33-.22-.41-.09-.41.09zm13.09 3.95l.28.06.32.12.35.18.36.27.36.35.35.47.32.59.28.73.21.88.14 1.04.05 1.23-.06 1.23-.16 1.04-.24.86-.32.71-.36.57-.4.45-.42.33-.42.24-.4.16-.36.09-.32.05-.24.02-.16-.01h-8.22v.82h5.84l.01 2.76.02.36-.05.34-.11.31-.17.29-.25.25-.31.24-.38.2-.44.17-.51.15-.58.13-.64.09-.71.07-.77.04-.84.01-1.27-.04-1.07-.14-.9-.2-.73-.25-.59-.3-.45-.33-.34-.34-.25-.34-.16-.33-.1-.3-.04-.25-.02-.2.01-.13v-5.34l.05-.64.13-.54.21-.46.26-.38.3-.32.33-.24.35-.2.35-.14.33-.1.3-.06.26-.04.21-.02.13-.01h5.84l.69-.05.59-.14.5-.21.41-.28.33-.32.27-.35.2-.36.15-.36.1-.35.07-.32.04-.28.02-.21V6.07h2.09l.14.01zm-6.47 14.25l-.23.33-.08.41.08.41.23.33.33.23.41.08.41-.08.33-.23.23-.33.08-.41-.08-.41-.23-.33-.33-.23-.41-.08-.41.08z"/></svg>
<!-- account -->
<svg style="left:8px;top:473.5px;z-index:12" width="16" height="16" viewBox="0 0 16 16" fill="none" stroke="#686868" stroke-width="1.05">
<circle cx="7.9" cy="7.8" r="6.6"/>
<circle cx="7.9" cy="4.9" r="1.8" fill="#686868" stroke="none"/>
<path d="M4.3 8.3H11.5Q11.5 11.8 7.9 11.8Q4.3 11.8 4.3 8.3Z" fill="#686868" stroke="none"/>
</svg>
<!-- gear -->
<svg style="left:8.2px;top:506.2px;z-index:12" width="15" height="15" viewBox="-7.5 -7.5 15 15" fill="none" stroke="#686868" stroke-width="1.05" stroke-linejoin="round">
<path d="M4.85 0.70 L6.44 1.46 L5.58 3.52 L3.92 2.94 L2.94 3.92 L3.52 5.58 L1.46 6.44 L0.70 4.85 L-0.70 4.85 L-1.46 6.44 L-3.52 5.58 L-2.94 3.92 L-3.92 2.94 L-5.58 3.52 L-6.44 1.46 L-4.85 0.70 L-4.85 -0.70 L-6.44 -1.46 L-5.58 -3.52 L-3.92 -2.94 L-2.94 -3.92 L-3.52 -5.58 L-1.46 -6.44 L-0.70 -4.85 L0.70 -4.85 L1.46 -6.44 L3.52 -5.58 L2.94 -3.92 L3.92 -2.94 L5.58 -3.52 L6.44 -1.46 L4.85 -0.70Z"/>
<circle r="2.1"/>
</svg>
<div class="a" style="left:15.9px;top:513.6px;width:10.6px;height:10.6px;border-radius:50%;background:#005fb8;z-index:13;"></div>
<div class="t" style="left:15.9px;top:513.6px;width:10.6px;text-align:center;font-size:6px;line-height:10.8px;color:#fff;font-weight:700;z-index:14;">1</div>
<!-- SIDEBAR icons -->
<svg style="left:125.5px;top:33.6px;z-index:12" width="9" height="3" viewBox="0 0 9 3"><circle cx="1.3" cy="1.5" r="0.75" fill="#4a4a4a"/><circle cx="4.1" cy="1.5" r="0.75" fill="#4a4a4a"/><circle cx="6.9" cy="1.5" r="0.75" fill="#4a4a4a"/></svg>
<svg style="left:34.5px;top:50.5px;z-index:12" width="9" height="7" viewBox="0 0 9 7" fill="none" stroke="#4a4a4a" stroke-width="0.9" stroke-linecap="round" stroke-linejoin="round"><path d="M1 1.5L3.9 4.5L6.8 1.5"/></svg>
<svg style="left:40.3px;top:64.8px;z-index:12" width="7.4" height="7.2" viewBox="0 0 24 24"><path fill="#4f93b5" d="M14.25.18l.9.2.73.26.59.3.45.32.34.34.25.34.16.33.1.3.04.26.02.2-.01.13V8.5l-.05.63-.13.55-.21.46-.26.38-.3.31-.33.25-.35.19-.35.14-.33.1-.3.07-.26.04-.21.02H8.77l-.69.05-.59.14-.5.22-.41.27-.33.32-.27.35-.2.36-.15.37-.1.35-.07.32-.04.27-.02.21v3.06H3.17l-.21-.03-.28-.07-.32-.12-.35-.18-.36-.26-.36-.36-.35-.46-.32-.59-.28-.73-.21-.88-.14-1.05-.05-1.23.06-1.22.16-1.04.24-.87.32-.71.36-.57.4-.44.42-.33.42-.24.4-.16.36-.1.32-.05.24-.01h.16l.06.01h8.16v-.83H6.18l-.01-2.75-.02-.37.05-.34.11-.31.17-.28.25-.26.31-.23.38-.2.44-.18.51-.15.58-.12.64-.1.71-.06.77-.04.84-.02 1.27.05zm-6.3 1.98l-.23.33-.08.41.08.41.23.34.33.22.41.09.41-.09.33-.22.23-.34.08-.41-.08-.41-.23-.33-.33-.22-.41-.09-.41.09zm13.09 3.95l.28.06.32.12.35.18.36.27.36.35.35.47.32.59.28.73.21.88.14 1.04.05 1.23-.06 1.23-.16 1.04-.24.86-.32.71-.36.57-.4.45-.42.33-.42.24-.4.16-.36.09-.32.05-.24.02-.16-.01h-8.22v.82h5.84l.01 2.76.02.36-.05.34-.11.31-.17.29-.25.25-.31.24-.38.2-.44.17-.51.15-.58.13-.64.09-.71.07-.77.04-.84.01-1.27-.04-1.07-.14-.9-.2-.73-.25-.59-.3-.45-.33-.34-.34-.25-.34-.16-.33-.1-.3-.04-.25-.02-.2.01-.13v-5.34l.05-.64.13-.54.21-.46.26-.38.3-.32.33-.24.35-.2.35-.14.33-.1.3-.06.26-.04.21-.02.13-.01h5.84l.69-.05.59-.14.5-.21.41-.28.33-.32.27-.35.2-.36.15-.36.1-.35.07-.32.04-.28.02-.21V6.07h2.09l.14.01zm-6.47 14.25l-.23.33-.08.41.08.41.23.33.33.23.41.08.41-.08.33-.23.23-.33.08-.41-.08-.41-.23-.33-.33-.23-.41-.08-.41.08z"/></svg>
<svg style="left:36px;top:503.5px;z-index:12" width="6" height="8" viewBox="0 0 6 8" fill="none" stroke="#4a4a4a" stroke-width="0.9" stroke-linecap="round" stroke-linejoin="round"><path d="M1.2 0.9L4.5 4.1L1.2 7.3"/></svg>
<svg style="left:36px;top:518.3px;z-index:12" width="6" height="8" viewBox="0 0 6 8" fill="none" stroke="#4a4a4a" stroke-width="0.9" stroke-linecap="round" stroke-linejoin="round"><path d="M1.2 0.9L4.5 4.1L1.2 7.3"/></svg>
<!-- TAB icons -->
<svg style="left:154.8px;top:31px;z-index:12" width="7.5" height="7.2" viewBox="0 0 24 24"><path fill="#4f93b5" d="M14.25.18l.9.2.73.26.59.3.45.32.34.34.25.34.16.33.1.3.04.26.02.2-.01.13V8.5l-.05.63-.13.55-.21.46-.26.38-.3.31-.33.25-.35.19-.35.14-.33.1-.3.07-.26.04-.21.02H8.77l-.69.05-.59.14-.5.22-.41.27-.33.32-.27.35-.2.36-.15.37-.1.35-.07.32-.04.27-.02.21v3.06H3.17l-.21-.03-.28-.07-.32-.12-.35-.18-.36-.26-.36-.36-.35-.46-.32-.59-.28-.73-.21-.88-.14-1.05-.05-1.23.06-1.22.16-1.04.24-.87.32-.71.36-.57.4-.44.42-.33.42-.24.4-.16.36-.1.32-.05.24-.01h.16l.06.01h8.16v-.83H6.18l-.01-2.75-.02-.37.05-.34.11-.31.17-.28.25-.26.31-.23.38-.2.44-.18.51-.15.58-.12.64-.1.71-.06.77-.04.84-.02 1.27.05zm-6.3 1.98l-.23.33-.08.41.08.41.23.34.33.22.41.09.41-.09.33-.22.23-.34.08-.41-.08-.41-.23-.33-.33-.22-.41-.09-.41.09zm13.09 3.95l.28.06.32.12.35.18.36.27.36.35.35.47.32.59.28.73.21.88.14 1.04.05 1.23-.06 1.23-.16 1.04-.24.86-.32.71-.36.57-.4.45-.42.33-.42.24-.4.16-.36.09-.32.05-.24.02-.16-.01h-8.22v.82h5.84l.01 2.76.02.36-.05.34-.11.31-.17.29-.25.25-.31.24-.38.2-.44.17-.51.15-.58.13-.64.09-.71.07-.77.04-.84.01-1.27-.04-1.07-.14-.9-.2-.73-.25-.59-.3-.45-.33-.34-.34-.25-.34-.16-.33-.1-.3-.04-.25-.02-.2.01-.13v-5.34l.05-.64.13-.54.21-.46.26-.38.3-.32.33-.24.35-.2.35-.14.33-.1.3-.06.26-.04.21-.02.13-.01h5.84l.69-.05.59-.14.5-.21.41-.28.33-.32.27-.35.2-.36.15-.36.1-.35.07-.32.04-.28.02-.21V6.07h2.09l.14.01zm-6.47 14.25l-.23.33-.08.41.08.41.23.33.33.23.41.08.41-.08.33-.23.23-.33.08-.41-.08-.41-.23-.33-.33-.23-.41-.08-.41.08z"/></svg>
<svg style="left:214.6px;top:31.9px;z-index:12" width="7" height="7" viewBox="0 0 7 7" fill="none" stroke="#3b3b3b" stroke-width="0.85" stroke-linecap="round"><path d="M0.8 0.7L6 5.9M6 0.7L0.8 5.9"/></svg>
<!-- breadcrumb icons -->
<svg style="left:159px;top:50.3px;z-index:12" width="7.3" height="7" viewBox="0 0 24 24"><path fill="#4f93b5" d="M14.25.18l.9.2.73.26.59.3.45.32.34.34.25.34.16.33.1.3.04.26.02.2-.01.13V8.5l-.05.63-.13.55-.21.46-.26.38-.3.31-.33.25-.35.19-.35.14-.33.1-.3.07-.26.04-.21.02H8.77l-.69.05-.59.14-.5.22-.41.27-.33.32-.27.35-.2.36-.15.37-.1.35-.07.32-.04.27-.02.21v3.06H3.17l-.21-.03-.28-.07-.32-.12-.35-.18-.36-.26-.36-.36-.35-.46-.32-.59-.28-.73-.21-.88-.14-1.05-.05-1.23.06-1.22.16-1.04.24-.87.32-.71.36-.57.4-.44.42-.33.42-.24.4-.16.36-.1.32-.05.24-.01h.16l.06.01h8.16v-.83H6.18l-.01-2.75-.02-.37.05-.34.11-.31.17-.28.25-.26.31-.23.38-.2.44-.18.51-.15.58-.12.64-.1.71-.06.77-.04.84-.02 1.27.05zm-6.3 1.98l-.23.33-.08.41.08.41.23.34.33.22.41.09.41-.09.33-.22.23-.34.08-.41-.08-.41-.23-.33-.33-.22-.41-.09-.41.09zm13.09 3.95l.28.06.32.12.35.18.36.27.36.35.35.47.32.59.28.73.21.88.14 1.04.05 1.23-.06 1.23-.16 1.04-.24.86-.32.71-.36.57-.4.45-.42.33-.42.24-.4.16-.36.09-.32.05-.24.02-.16-.01h-8.22v.82h5.84l.01 2.76.02.36-.05.34-.11.31-.17.29-.25.25-.31.24-.38.2-.44.17-.51.15-.58.13-.64.09-.71.07-.77.04-.84.01-1.27-.04-1.07-.14-.9-.2-.73-.25-.59-.3-.45-.33-.34-.34-.25-.34-.16-.33-.1-.3-.04-.25-.02-.2.01-.13v-5.34l.05-.64.13-.54.21-.46.26-.38.3-.32.33-.24.35-.2.35-.14.33-.1.3-.06.26-.04.21-.02.13-.01h5.84l.69-.05.59-.14.5-.21.41-.28.33-.32.27-.35.2-.36.15-.36.1-.35.07-.32.04-.28.02-.21V6.07h2.09l.14.01zm-6.47 14.25l-.23.33-.08.41.08.41.23.33.33.23.41.08.41-.08.33-.23.23-.33.08-.41-.08-.41-.23-.33-.33-.23-.41-.08-.41.08z"/></svg>
<svg style="left:216px;top:51.5px;z-index:12" width="5" height="6" viewBox="0 0 5 6" fill="none" stroke="#6a6a6a" stroke-width="0.8" stroke-linecap="round" stroke-linejoin="round"><path d="M0.9 0.6L3.9 3L0.9 5.4"/></svg>
<!-- editor actions -->
<svg style="left:960px;top:29.5px;z-index:12" width="56" height="12" viewBox="0 0 56 12" fill="none" stroke="#3b3b3b" stroke-width="0.9" stroke-linecap="round" stroke-linejoin="round">
<path d="M2.2 1.7V9.3Q2.2 10 2.9 9.6L9 6Q9.6 5.5 9 5L2.9 1.4Q2.2 1 2.2 1.7Z"/>
<path d="M13.9 4.6L16.2 6.8L18.5 4.6" stroke="#4a4a4a" stroke-width="0.8"/>
<rect x="27" y="1.1" width="8.6" height="9.3" rx="1.4"/>
<path d="M31.3 1.1V10.4"/>
<circle cx="46.1" cy="5.7" r="0.75" fill="#3b3b3b" stroke="none"/><circle cx="48.8" cy="5.7" r="0.75" fill="#3b3b3b" stroke="none"/><circle cx="51.5" cy="5.7" r="0.75" fill="#3b3b3b" stroke="none"/>
</svg>
<!-- STATUS BAR icons -->
<svg style="left:7.6px;top:531.3px;z-index:12" width="9" height="10" viewBox="0 0 9 10" fill="none" stroke="#3b3b3b" stroke-width="0.85" stroke-linecap="round" stroke-linejoin="round"><path d="M1 3.1L4 5.9L1 8.8M7.7 1.2L5.6 3.6L7.7 6.1"/></svg>
<svg style="left:28.6px;top:531.7px;z-index:12" width="30" height="10" viewBox="0 0 30 10" fill="none" stroke="#3b3b3b" stroke-width="0.8" stroke-linecap="round" stroke-linejoin="round">
<circle cx="4.9" cy="4.9" r="4.2"/><path d="M3.2 3.2L6.6 6.6M6.6 3.2L3.2 6.6"/>
<path d="M24.4 1L28.9 8.6H19.9Z"/><path d="M24.4 3.7V6.1M24.4 7.3V7.4"/>
</svg>
<div class="a" style="left:78px;top:533.7px;width:5.2px;height:5.2px;border-radius:50%;background:#005fb8;z-index:12;"></div>
<!-- copilot status -->
<svg style="left:904px;top:531.2px;z-index:12" width="12" height="10" viewBox="0 0 12 10" fill="none" stroke="#2b2b2b" stroke-width="1.15" stroke-linejoin="round" stroke-linecap="round">
<rect x="2.3" y="1" width="3.5" height="3.5" rx="1.5"/>
<rect x="6.2" y="1" width="3.5" height="3.5" rx="1.5"/>
<path d="M2.1 3.6Q0.9 4.6 0.9 5.8V6.9Q0.9 7.6 2.6 8.4Q4.2 9.2 6 9.2Q7.8 9.2 9.4 8.4Q11.1 7.6 11.1 6.9V5.8Q11.1 4.6 9.9 3.6" stroke-width="1.1"/>
<path d="M4.8 5.9V7.1M7.2 5.9V7.1" stroke-width="0.95"/>
</svg>
<!-- bell -->
<svg style="left:1007.5px;top:532px;z-index:12" width="10" height="10" viewBox="0 0 10 10" fill="none" stroke="#3b3b3b" stroke-width="0.85" stroke-linejoin="round" stroke-linecap="round">
<path d="M1.1 7.2Q2 6.3 2 4.6V3.7Q2 0.8 4.7 0.8Q7.4 0.8 7.4 3.7V4.6Q7.4 6.3 8.3 7.2Z"/><path d="M3.7 7.6Q3.8 8.9 4.7 8.9Q5.6 8.9 5.7 7.6"/>
</svg>

</body></html>
